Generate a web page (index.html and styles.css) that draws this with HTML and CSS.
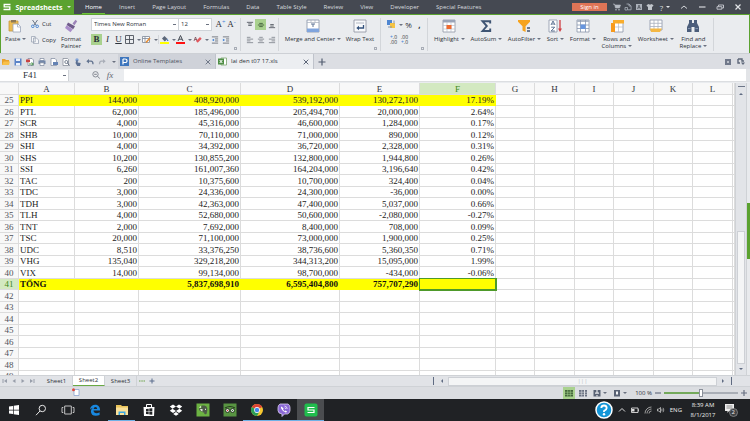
FILE: index.html
```html
<!DOCTYPE html>
<html lang="en">
<head>
    <meta charset="UTF-8">
    <meta name="viewport" content="width=device-width, initial-scale=1.0">
    <title>lai den t07 17.xls - Spreadsheets</title>
    <link rel="stylesheet" href="styles.css">
</head>
<body>

<div class="app">
    <header class="titlebar">
        <button class="brand">
            <svg class="brand-logo" viewBox="0 0 8 7"><path d="M7.5 1H1.2v2.3h5.6V6H.5" fill="none" stroke="#fff" stroke-width="1.3"/></svg>
            <span>Spreadsheets</span>
            <i class="caret light"></i>
        </button>
        <nav class="menu">
            <a href="#" class="active">Home</a>
            <a href="#">Insert</a>
            <a href="#">Page Layout</a>
            <a href="#">Formulas</a>
            <a href="#">Data</a>
            <a href="#">Table Style</a>
            <a href="#">Review</a>
            <a href="#">View</a>
            <a href="#">Developer</a>
            <a href="#">Special Features</a>
        </nav>
        <button class="sign-in">Sign in</button>
        <div class="title-tools">
            <button aria-label="Store"><svg viewBox="0 0 8 8"><path d="M0 1h1.5l1 4h4l1-3H2" fill="#b5bac2" stroke="#b5bac2" stroke-width=".6"/><circle cx="3" cy="6.8" r=".8" fill="#b5bac2"/><circle cx="6" cy="6.8" r=".8" fill="#b5bac2"/></svg></button>
            <button aria-label="Cloud"><svg viewBox="0 0 8 8"><path d="M2.5 1h2.6l2 2v3.8H4M1 7h2.5V4.500H1zM5 1v2h2" fill="none" stroke="#aab0ba" stroke-width=".8"/></svg></button>
            <button aria-label="Language"><svg viewBox="0 0 8 8"><path d="M1 1h6v6H1z" fill="#abb0b9"/><path d="M2.500 6L4 2l1.500 4M3 4.700h2" fill="none" stroke="#454952" stroke-width=".7"/></svg></button>
            <button aria-label="Skin"><svg viewBox="0 0 8 8"><path d="M.5 2.200L2.500 1q1.500 1 3 0l2 1.200-.8 1.600L6 3.500V7H2V3.500l-.7.300z" fill="#c0c4ca"/></svg></button>
            <button class="help" aria-label="Help">?<i class="caret light"></i></button>
        </div>
        <div class="window-tools">
            <button aria-label="Collapse ribbon"><svg viewBox="0 0 8 8"><path d="M1 5.500L4 3l3 2.500" fill="none" stroke="#d5d8dc"/></svg></button>
            <button aria-label="Minimize"><svg viewBox="0 0 8 8"><path d="M1 4h6.500" stroke="#d5d8dc" stroke-width="1.200"/></svg></button>
            <button aria-label="Restore"><svg viewBox="0 0 8 8"><path d="M2.500 3.500V2h5v3H6M1 3.700h4.800v2.500H1z" fill="none" stroke="#c9ccd2" stroke-width=".9"/></svg></button>
            <button aria-label="Close"><svg viewBox="0 0 8 8"><path d="M1.500 1.500l5 5M6.500 1.500l-5 5" stroke="#e2e4e7" stroke-width="1.200"/></svg></button>
        </div>
    </header>

    <section class="ribbon">
        <div class="group clipboard">
            <button class="command paste">
                <svg viewBox="0 0 14 14"><path d="M1 2h9v10H1z" fill="#edbc52" stroke="#c7993f" stroke-width=".8"/><path d="M3 1h5v2.500H3z" fill="#8d7a56"/><path d="M5 5h5l2.500 2.500V13H5z" fill="#fff" stroke="#9aa5b8" stroke-width=".8"/><path d="M9.500 5v3h3" fill="none" stroke="#9aa5b8" stroke-width=".7"/></svg>
                <span>Paste <i class="caret"></i></span>
            </button>
            <div class="stack">
                <button class="small"><svg viewBox="0 0 8 8"><path d="M1.500 0l3.800 5.500M6.500 0L2.700 5.500" stroke="#6c7686"/><circle cx="1.800" cy="6.300" r="1.300" fill="none" stroke="#4b86d1"/><circle cx="6.200" cy="6.300" r="1.300" fill="none" stroke="#4b86d1"/></svg><span>Cut</span></button>
                <button class="small"><svg viewBox="0 0 8 8"><path d="M.5.500h3.700v5.500H.5zM2.500 2h3l2 2v3.600h-5z" fill="#f5f6f8" stroke="#929cad" stroke-width=".7"/></svg><span>Copy</span></button>
            </div>
            <button class="command">
                <svg viewBox="0 0 14 14"><path d="M8.500 4.500L11.500.800l1.700 1.400-2.700 4" fill="#9c83b8"/><path d="M4 3.500l7 3.800-1.800 3L2.600 6z" fill="#6f5b8b"/><path d="M2.500 6.300l6.300 4-2.300 3L1 9z" fill="#a98cc9"/></svg>
                <span>Format<br>Painter</span>
            </button>
        </div>

        <div class="group font">
            <div class="row">
                <select class="font-name" aria-label="Font"><option>Times New Roman</option></select>
                <select class="font-size" aria-label="Font size"><option>12</option></select>
                <button class="letter grow">A<sup>+</sup></button>
                <button class="letter">A<sup>-</sup></button>
            </div>
            <div class="row">
                <button class="letter on"><b>B</b></button>
                <button class="letter"><i>I</i></button>
                <button class="letter"><u>U</u></button>
                <button class="drop" aria-label="Borders"><svg viewBox="0 0 9 9"><path d="M.5.500h8v8h-8zM4.500.500v8M.5 4.500h8" fill="none" stroke="#4e535c" stroke-width=".9"/></svg><i class="caret"></i></button>
                <button class="drop" aria-label="Draw border"><svg viewBox="0 0 9 9"><path d="M.5 1.500h7v6h-7zM.5 3.500h7M3 1.500v6" fill="#fff" stroke="#7e8898" stroke-width=".8"/><path d="M4 7.500L8 3" stroke="#e58b32" stroke-width="1.500"/></svg><i class="caret"></i></button>
                <button class="drop split" aria-label="Fill color"><svg viewBox="0 0 9 9"><path d="M2 3.500L4.500 1l3 3-2.700 2.500z" fill="#5c6779"/><path d="M7.500 3.500l1 2.500H7z" fill="#3976c5"/><path d="M0 7h9v2H0z" fill="#ff0"/></svg><i class="caret"></i></button>
                <button class="drop" aria-label="Font color"><svg viewBox="0 0 9 9"><path d="M2 6L4.500.500 7 6M3 4.200h3" fill="none" stroke="#454a54"/><path d="M0 7h9v2H0z" fill="#f11"/></svg><i class="caret"></i></button>
                <button class="drop" aria-label="Clear"><svg viewBox="0 0 9 9"><path d="M1 6l1.500-4L4 6M1.700 4.500h2" fill="none" stroke="#7a4b55" stroke-width=".8"/><path d="M3 6l4-4 1.700 1.700-4 4z" fill="#e2575d"/></svg><i class="caret"></i></button>
                <button class="glyph" aria-label="Decrease indent"><svg viewBox="0 0 9 9"><path d="M1 1h7M4.500 3.300H8M4.500 5.600H8M1 8h7" stroke="#6b7079"/><path d="M3.500 3v3L1 4.500z" fill="#3c7fd6"/></svg></button>
                <button class="glyph" aria-label="Increase indent"><svg viewBox="0 0 9 9"><path d="M1 1h7M4.500 3.300H8M4.500 5.600H8M1 8h7" stroke="#6b7079"/><path d="M1 3v3l2.500-1.500z" fill="#3c7fd6"/></svg></button>
            </div>
            <i class="launcher"></i>
        </div>

        <div class="group align">
            <div class="row">
                <button class="glyph" aria-label="Top"><svg viewBox="0 0 9 9"><path d="M1 1.500h7M2.500 3.300h4M2.500 5h4" stroke="#555a63"/></svg></button>
                <button class="glyph on" aria-label="Middle"><svg viewBox="0 0 9 9"><path d="M1 4.500h7M2.500 2.700h4M2.500 6.300h4" stroke="#3f5e38"/></svg></button>
                <button class="glyph" aria-label="Bottom"><svg viewBox="0 0 9 9"><path d="M1 7.500h7M2.500 4h4M2.500 5.700h4" stroke="#555a63"/></svg></button>
            </div>
            <div class="row">
                <button class="glyph" aria-label="Left"><svg viewBox="0 0 9 9"><path d="M1 1.500h4M1 3.500h7M1 5.500h4M1 7.500h7" stroke="#7a7e86" stroke-width=".9"/></svg></button>
                <button class="glyph" aria-label="Center"><svg viewBox="0 0 9 9"><path d="M2.500 1.500h4M1 3.500h7M2.500 5.500h4M1 7.500h7" stroke="#7a7e86" stroke-width=".9"/></svg></button>
                <button class="glyph" aria-label="Right"><svg viewBox="0 0 9 9"><path d="M4 1.500h4M1 3.500h7M4 5.500h4M1 7.500h7" stroke="#7a7e86" stroke-width=".9"/></svg></button>
            </div>
        </div>

        <div class="group merge">
            <button class="command">
                <svg viewBox="0 0 14 14"><path d="M1 1h12v12H1z" fill="#fff" stroke="#8792a7" stroke-width=".8"/><path d="M1 9.500h12V13H1z" fill="#80a5de"/><path d="M1 3.500h12M5 1v2.500M9 1v2.500" stroke="#a5adbc" stroke-width=".7"/><path d="M5 5h4M7 5v3" stroke="#5c7395"/></svg>
                <span>Merge and Center <i class="caret"></i></span>
            </button>
            <button class="command">
                <svg viewBox="0 0 14 14"><path d="M1 1h12v12H1z" fill="#f8f9fb" stroke="#8a8fa0" stroke-width=".8"/><path d="M3 4h8" stroke="#b3b8c2"/><path d="M10.500 6v3H5" fill="none" stroke="#33517c" stroke-width="1.300"/><path d="M6 6.800v4.400L3.300 9z" fill="#33517c"/></svg>
                <span>Wrap Text</span>
            </button>
            <i class="launcher"></i>
        </div>

        <div class="group number">
            <div class="row">
                <button class="drop" aria-label="Currency"><svg viewBox="0 0 9 9"><path d="M0 0h5v5H0z" fill="#4f86d1"/><path d="M3 3h5v5H3z" fill="#f6c443"/><path d="M1 7h4M7 .500v3" stroke="#8494ad"/></svg><i class="caret"></i></button>
                <button class="letter sans">%</button>
                <button class="letter sans"><b>,</b></button>
            </div>
            <div class="row">
                <button class="decimal" aria-label="Increase decimal"><em>+</em>.0<br>.00</button>
                <button class="decimal" aria-label="Decrease decimal">.00<br><em>+</em>.0</button>
            </div>
            <i class="launcher"></i>
        </div>

        <div class="group commands">
            <button class="command">
                <svg viewBox="0 0 14 14"><path d="M1 1h12v12H1z" fill="#fff" stroke="#8d94a3" stroke-width=".8"/><path d="M1 1h12v2.500H1z" fill="#9aa4b8"/><path d="M1 6.500h12M1 10h12M5 3v10M9 3v10" stroke="#b9bfcb" stroke-width=".7"/><path d="M4.500 6h5v4h-5z" fill="#ee6a30"/></svg>
                <span>Highlight <i class="caret"></i></span>
            </button>
            <button class="command">
                <svg viewBox="0 0 14 14"><path d="M11.200 4.500V2.200H3.500L7.800 7l-4.300 5h7.700V9.500" fill="none" stroke="#3e5473" stroke-width="1.900"/></svg>
                <span>AutoSum <i class="caret"></i></span>
            </button>
            <button class="command">
                <svg viewBox="0 0 14 14"><path d="M1 1h12v1.800L8.600 7.300V13L5.500 11.500V7.300L1 2.800z" fill="#f6a31d"/><path d="M10 9h3M10 12h3" stroke="#43536d" stroke-width="1.300"/></svg>
                <span>AutoFilter <i class="caret"></i></span>
            </button>
            <button class="command">
                <svg viewBox="0 0 14 14"><path d="M1 1h8v12H1z" fill="#fff" stroke="#8b95a8" stroke-width=".8"/><path d="M3 6l2-4 2 4M3.700 5h2.600M3.200 8.200h3.500L3.200 12h3.700" fill="none" stroke="#4e6589" stroke-width=".9"/><path d="M12 1v9" stroke="#cf3e43" stroke-width="1.300"/><path d="M10 9.500h4L12 13z" fill="#cf3e43"/></svg>
                <span>Sort <i class="caret"></i></span>
            </button>
            <button class="command">
                <svg viewBox="0 0 14 14"><path d="M1 1h12v12H1z" fill="#fff" stroke="#8b95a8" stroke-width=".8"/><path d="M1 1h12v2H1z" fill="#aeb7c6"/><path d="M1 6h12M1 9.500h12M4.500 1v12M9.500 1v12" stroke="#8797b2" stroke-width=".8"/><path d="M4.500 5.500h5v4.500h-5z" fill="#6796df"/></svg>
                <span>Format <i class="caret"></i></span>
            </button>
            <button class="command">
                <svg viewBox="0 0 14 14"><path d="M4 3h9v10H4z" fill="#fff" stroke="#8b95a8" stroke-width=".8"/><path d="M8.500 3v10M4 8h9" stroke="#b4bbc8" stroke-width=".7"/><path d="M1 4h4v9H1z" fill="#f79a1c"/><path d="M3 1h11v3.500H3z" fill="#f9ad2c"/></svg>
                <span>Rows and<br>Columns <i class="caret"></i></span>
            </button>
            <button class="command">
                <svg viewBox="0 0 14 14"><path d="M1 1h12v10H1z" fill="#fff" stroke="#8b95a8" stroke-width=".8"/><path d="M1 4.300h12M1 7.500h12M5 1v10M9 1v10" stroke="#a9b1bf" stroke-width=".8"/><path d="M1 9.500h12l-2 3.500H2z" fill="#f4b744"/></svg>
                <span>Worksheet <i class="caret"></i></span>
            </button>
            <button class="command">
                <svg viewBox="0 0 14 14"><path d="M3 1h3v3h2V1h3v3l2 4v5H8.500V8h-3v5H1V8l2-4z" fill="#4b5d7b"/><path d="M2 9.500h2.500M9.500 9.500H12" stroke="#8294b0"/></svg>
                <span>Find and<br>Replace <i class="caret"></i></span>
            </button>
        </div>
    </section>

    <section class="tabs">
        <div class="quick">
            <button aria-label="Open"><svg viewBox="0 0 8 8"><path d="M0 1h3l1 1h3v5H0z" fill="#e8a12c"/><path d="M1.500 3.500H8L7 7H0z" fill="#f8c04a"/></svg></button>
            <button aria-label="Save"><svg viewBox="0 0 8 8"><path d="M.5.500h7v7h-7z" fill="#5a83c8"/><path d="M2 .500h4V3H2zM2 5h4v2.500H2z" fill="#eef3fb"/></svg></button>
            <button aria-label="Export PDF"><svg viewBox="0 0 8 8"><path d="M2 .500h4L7.500 2v5.500H2z" fill="#fff" stroke="#76809a" stroke-width=".7"/><path d="M0 1.500h4v2.700H0z" fill="#c94343"/><path d="M3 6h4M5.500 4.500L7.500 6l-2 1.500" stroke="#4b9350" fill="none"/></svg></button>
            <button aria-label="Print"><svg viewBox="0 0 8 8"><path d="M2 .500h4v2H2z" fill="#fff" stroke="#7b879c" stroke-width=".7"/><path d="M.5 2.500h7v3.500h-7z" fill="#7388ab"/><path d="M2 4.800h4v2.700H2z" fill="#fff" stroke="#7b879c" stroke-width=".7"/></svg></button>
            <button aria-label="Quick print"><svg viewBox="0 0 8 8"><path d="M1 .500h4l1.500 1.500v5.500H1z" fill="#fff" stroke="#7b879c" stroke-width=".7"/><path d="M3 4h5v3H3z" fill="#6482b4"/></svg></button>
            <button aria-label="Preview"><svg viewBox="0 0 8 8"><path d="M1 .500h4.500l1 1v6H1z" fill="#fff" stroke="#7b828f" stroke-width=".7"/><circle cx="4.300" cy="4" r="1.500" fill="none" stroke="#596578" stroke-width=".8"/><path d="M5.500 5.200L7.500 7.500" stroke="#596578"/></svg></button>
            <button aria-label="Touch"><svg viewBox="0 0 8 8"><circle cx="3" cy="2" r="1.700" fill="#81a4d9"/><path d="M2.500 2h1.200v2.500l3 .5L6 8H3.200L1.500 5z" fill="#5b6f92"/></svg></button>
            <button aria-label="Undo"><svg viewBox="0 0 8 8"><path d="M2 3.200h3q2 0 2 3" fill="none" stroke="#62738f" stroke-width="1.300"/><path d="M3 1v4.500L.3 3.200z" fill="#62738f"/></svg></button>
            <button aria-label="Redo"><svg viewBox="0 0 8 8"><path d="M6 3.200H3.500q-2 0-2 3" fill="none" stroke="#a9aeb8" stroke-width="1.300"/><path d="M5 1v4.500l2.700-2.300z" fill="#a9aeb8"/></svg></button>
            <button aria-label="Customize"><i class="caret"></i></button>
        </div>
        <div class="doc-tab">
            <svg viewBox="0 0 9 9"><path d="M0 0h9v9H0z" fill="#3e76bd"/><path d="M3 2v5.500M3 2h2q2 0 2 1.800T5 5.500H3" fill="none" stroke="#fff" stroke-width="1.200"/></svg>
            <span>Online Templates</span>
            <button class="close" aria-label="Close tab"><svg viewBox="0 0 6 6"><path d="M.7.700l4.600 4.600M5.300.700L.7 5.300" stroke="#666f80" stroke-width=".9"/></svg></button>
        </div>
        <div class="doc-tab current">
            <svg viewBox="0 0 9 9"><path d="M3 1h5.500v7H3z" fill="#fff" stroke="#7ba36e" stroke-width=".8"/><path d="M0 1.500h6v6H0z" fill="#4f8e46"/><path d="M1.700 3l2.600 3M4.300 3L1.700 6" stroke="#fff"/></svg>
            <span>lai den t07 17.xls</span>
            <button class="close" aria-label="Close tab"><svg viewBox="0 0 6 6"><path d="M.7.700l4.600 4.600M5.300.700L.7 5.300" stroke="#4c566a" stroke-width=".9"/></svg></button>
        </div>
        <button class="new-tab" aria-label="New tab"><svg viewBox="0 0 8 8"><path d="M4 .500v7M.5 4h7" stroke="#535d70" stroke-width="1.200"/></svg></button>
        <div class="tab-tools">
            <button aria-label="Tab list"><svg viewBox="0 0 8 8"><path d="M1 1h6v6H1z" fill="#70788a"/><path d="M3 3h2v2H3z" fill="#b9bec8"/></svg></button>
            <button aria-label="Tab options"><svg viewBox="0 0 8 8"><path d="M1 1h4v2h2M1 1v4h2" fill="none" stroke="#5f687a" stroke-width="1.400"/><path d="M4 4.500h4L6 7z" fill="#5f687a"/></svg></button>
        </div>
    </section>

    <section class="formula-bar">
        <input class="name-box" aria-label="Name box" value="F41">
        <i class="caret name-caret"></i>
        <button class="fx-search" aria-label="Find"><svg viewBox="0 0 8 8"><circle cx="3.500" cy="3.300" r="2.700" fill="none" stroke="#7d828c" stroke-width=".9"/><path d="M2.200 3.300h2.600M5.500 5.300L7.800 7.500" stroke="#7d828c"/></svg></button>
        <button class="fx" aria-label="Insert function"><i>fx</i></button>
        <input class="formula" aria-label="Formula">
    </section>

    <main class="workspace">
        <div class="sheet">
            <table>
                <colgroup>
                    <col class="w-head"><col class="w-a"><col class="w-b"><col class="w-c"><col class="w-d"><col class="w-e"><col class="w-f">
                    <col class="w-g"><col class="w-h"><col class="w-g"><col class="w-h"><col class="w-g"><col class="w-h"><col>
                </colgroup>
                <thead>
                    <tr><th></th><th>A</th><th>B</th><th>C</th><th>D</th><th>E</th><th class="picked">F</th><th>G</th><th>H</th><th>I</th><th>J</th><th>K</th><th>L</th><th></th></tr>
                </thead>
                <tbody id="rows"></tbody>
            </table>
        </div>
        <div class="scroll-v">
            <i class="split-bar"></i>
            <i class="arrow up"></i>
            <div class="track"><div class="thumb"></div></div>
            <i class="arrow down"></i>
        </div>
        <div class="side"><button class="side-tab" aria-label="Task pane"></button></div>
    </main>

    <section class="sheet-tabs">
        <div class="sheet-nav">
            <button aria-label="First sheet"><svg viewBox="0 0 6 6"><path d="M1 1v4" stroke="#989eaa"/><path d="M5 1v4L2 3z" fill="#989eaa"/></svg></button>
            <button aria-label="Previous sheet"><svg viewBox="0 0 6 6"><path d="M4.500 1v4l-3-2z" fill="#989eaa"/></svg></button>
            <button aria-label="Next sheet"><svg viewBox="0 0 6 6"><path d="M1.500 1v4l3-2z" fill="#989eaa"/></svg></button>
            <button aria-label="Last sheet"><svg viewBox="0 0 6 6"><path d="M5 1v4" stroke="#989eaa"/><path d="M1 1v4l3-2z" fill="#989eaa"/></svg></button>
        </div>
        <button class="sheet-tab">Sheet1</button>
        <button class="sheet-tab current">Sheet2</button>
        <button class="sheet-tab">Sheet3</button>
        <button class="more" aria-label="All sheets"><svg viewBox="0 0 6 6"><path d="M0 3h1.500M2.300 3h1.500M4.500 3H6" stroke="#6ba349" stroke-width="1.200"/></svg></button>
        <button class="more" aria-label="Add sheet"><svg viewBox="0 0 6 6"><path d="M3 .500v5M.5 3h5" stroke="#5a6c8d"/></svg></button>
        <div class="scroll-h">
            <i class="grip"></i>
            <i class="arrow left"></i>
            <div class="thumb"><span>|||</span></div>
            <i class="arrow right"></i>
            <i class="grip"></i>
        </div>
    </section>

    <footer class="status">
        <svg class="macro" viewBox="0 0 8 8"><path d="M2 1.500h5v6H2z" fill="#fff" stroke="#8ba4d0" stroke-width=".8"/><circle cx="1.500" cy="1.800" r="1.500" fill="#e0483c"/></svg>
        <div class="views">
            <button class="on" aria-label="Normal view"><svg viewBox="0 0 8 8"><path d="M0 1h8v6.500H0z" fill="#44663a"/><path d="M0 3.200h8M0 5.400h8M2.700 1v6.500M5.300 1v6.500" stroke="#a3cf8c" stroke-width=".6"/></svg></button>
            <button aria-label="Page break view"><svg viewBox="0 0 8 8"><path d="M0 1h5v6.500H0zM6 1h2v6.500H6z" fill="#697081"/><path d="M0 3.200h8M0 5.400h8M2.700 1v6.500" stroke="#d8dbe0" stroke-width=".6"/></svg></button>
            <button aria-label="Reading layout"><svg viewBox="0 0 8 8"><path d="M.5 1h7v6.500h-7z" fill="#596274"/><path d="M4 1v3M2 4.200h4M4 6v1.500" stroke="#e6e8ec" stroke-width="1.200"/></svg><i class="caret"></i></button>
            <button aria-label="Full screen"><svg viewBox="0 0 8 8"><path d="M1 1h6v6.500H1z" fill="#596274"/><path d="M3 2.500h2v3H3z" fill="#f4f5f7"/></svg><i class="caret"></i></button>
        </div>
        <label class="zoom-label" for="zoom">100 %</label>
        <button class="step" aria-label="Zoom out"><svg viewBox="0 0 6 6"><path d="M0 3h6" stroke="#687183" stroke-width="1.200"/></svg></button>
        <input class="zoom" id="zoom" type="range" min="0" max="100" value="50">
        <button class="step" aria-label="Zoom in"><svg viewBox="0 0 6 6"><path d="M3 0v6M0 3h6" stroke="#687183" stroke-width="1.200"/></svg></button>
    </footer>
</div>

<div class="taskbar">
    <button aria-label="Start"><svg viewBox="0 0 14 14"><path d="M2 3.500l4-.6v3.800H2zM6.700 2.800L12 2v4.700H6.700zM2 7.400h4v3.700l-4-.6zM6.700 7.400H12V12l-5.300-.8z" fill="#fff"/></svg></button>
    <button aria-label="Search"><svg viewBox="0 0 14 14"><circle cx="8.300" cy="5.500" r="3.200" fill="none" stroke="#e8e8e8"/><path d="M6 8l-4 4.200" stroke="#e8e8e8"/></svg></button>
    <button aria-label="Task view"><svg viewBox="0 0 14 14"><path d="M3.700 3h6.600v8H3.700zM2.300 4.500H1v5h1.300M11.700 4.500H13v5h-1.300" fill="none" stroke="#d5d5d5" stroke-width=".9"/></svg></button>
    <button aria-label="Edge"><svg viewBox="0 0 14 14"><path d="M2 6.500C2.300 3.500 4.500 1.800 7.200 1.800c3.400 0 4.900 2.400 4.900 5.800H5.500q.3 2.600 3 2.600 1.700 0 3.100-.9V12q-1.500.8-3.800.8-4.800 0-4.900-4.600.1-2.200 2-3.500Q3.200 5.200 2 6.500zM5.600 5.900h3.600q-.1-1.800-1.700-1.800-1.600 0-1.900 1.800z" fill="#1888e0"/></svg></button>
    <button class="open" aria-label="File Explorer"><svg viewBox="0 0 14 14"><path d="M1 2h5l1 1h6v9H1z" fill="#e9c45a"/><path d="M1 4.500h12V12H1z" fill="#fae199"/><path d="M3.500 12V8.500h7V12H9V10H5v2z" fill="#3ba5e0"/></svg></button>
    <button aria-label="Store"><svg viewBox="0 0 14 14"><path d="M1.500 4h11L12 13H2z" fill="#fff"/><path d="M4.500 4V1.500h5V4" fill="none" stroke="#fff"/><path d="M4 6l2.700-.3v2.500H4zM7.300 5.600l3-.4v3h-3zM4 8.800h2.700v2.500L4 11zM7.300 8.800h3v3l-3-.4z" fill="#222426"/></svg></button>
    <button aria-label="Dropbox"><svg viewBox="0 0 14 14"><path d="M4 1.500l3 2-3.500 2.200L.8 3.600zM10 1.500l-3 2 3.500 2.200 2.700-2.100zM3.500 5.700L7 8l-3 2L.8 7.800zM10.500 5.700L7 8l3 2 3.200-2.200zM7 9l2.800 2L7 12.800 4.200 11z" fill="#fff"/></svg></button>
    <button aria-label="Evernote"><svg viewBox="0 0 14 14"><path d="M.5.500h13v13H.5z" fill="#6cb343"/><path d="M5.500 2.500h3q2.500.500 2.800 3 .3 3-.8 5.500-2.500 1.200-2.300-1.500-1.700.300-2.200-1Q3 8.500 3 5.300h2.500z" fill="#4d5a48"/><path d="M3 4.700l2-2v2z" fill="#eef3ea"/><path d="M4 6q.5 2 2.500 2.500V6z" fill="#dfe8da"/><path d="M9 6.300h1" stroke="#fff"/></svg></button>
    <button aria-label="TripAdvisor"><svg viewBox="0 0 14 14"><path d="M.5.500h13v13H.5z" fill="#589442"/><path d="M2 5q5-3 10 0" fill="none" stroke="#26381f" stroke-width="1.200"/><circle cx="4.500" cy="7.500" r="2" fill="#eee" stroke="#26381f"/><circle cx="9.500" cy="7.500" r="2" fill="#eee" stroke="#26381f"/><circle cx="4.500" cy="7.500" r=".7" fill="#c33"/><circle cx="9.500" cy="7.500" r=".7" fill="#373"/></svg></button>
    <button class="open" aria-label="Chrome"><svg viewBox="0 0 14 14"><circle cx="7" cy="7" r="6" fill="#f6c730"/><path d="M7 7L1.800 4A6 6 0 0 1 12.200 4z" fill="#dc4437"/><path d="M1.800 4A6 6 0 0 0 7 13l2.500-4.500L7 7z" fill="#2d9f58"/><circle cx="7" cy="7" r="2.900" fill="#fff"/><circle cx="7" cy="7" r="2.200" fill="#4587ee"/></svg></button>
    <button class="open" aria-label="Viber"><svg viewBox="0 0 14 14"><path d="M3 1h8q2 1 2 3.500v3Q13 10 10.500 11H7.500L5 13.500V11Q1 10.500 1 7.500v-3Q1 2 3 1z" fill="#8c69d6" stroke="#d9cef1" stroke-width=".8"/><path d="M4.500 3.500q-1 .7-.3 2 1.600 3.300 4.500 4 1 0 1.300-1L8.500 7.500l-.8.700Q6.500 7.500 6 6.300l.6-.8z" fill="#fff"/><path d="M7.500 3q2.500.3 2.700 3M7.700 4.600q.9.200 1 1.300" fill="none" stroke="#fff" stroke-width=".7"/></svg></button>
    <button class="open focused" aria-label="Spreadsheets"><svg viewBox="0 0 14 14"><rect x=".5" y=".500" width="13" height="13" rx="2" fill="#20bd4d"/><path d="M10.500 4.500H4V7h6v2.500H3.500" fill="none" stroke="#fff" stroke-width="1.200"/></svg></button>
    <div class="tray">
        <button class="assist" aria-label="Assist"><svg viewBox="0 0 18 18"><circle cx="9" cy="9" r="8" fill="#1496d8" stroke="#fff" stroke-width="1.500"/><path d="M6.300 7Q6.500 4.500 9 4.500T11.700 7Q11.700 8.500 9 10v1" fill="none" stroke="#fff" stroke-width="1.800"/><circle cx="9" cy="13.200" r="1.200" fill="#fff"/></svg></button>
        <button aria-label="Hidden icons"><svg viewBox="0 0 8 8"><path d="M1 5.500L4 2.500l3 3" fill="none" stroke="#ddd"/></svg></button>
        <button aria-label="Battery"><svg viewBox="0 0 8 8"><path d="M.5 2h6.500v4.500H.5z" fill="none" stroke="#ddd" stroke-width=".9"/><path d="M1 3h2.500v2.500H1zM7.200 3.300H8v2h-.8z" fill="#ddd"/></svg></button>
        <button aria-label="Wi-Fi"><svg viewBox="0 0 8 8"><path d="M1 7.500A6.500 6.500 0 0 1 7.500 1M3 7.500A4.500 4.500 0 0 1 7.500 3M5 7.500A2.500 2.500 0 0 1 7.500 5" fill="none" stroke="#aaa" stroke-width=".9"/></svg></button>
        <button aria-label="Volume"><svg viewBox="0 0 8 8"><path d="M.5 3h1.300L3.500 1.500v5L1.800 5H.5z" fill="none" stroke="#ddd" stroke-width=".7"/><path d="M4.700 2.800q.8 1.200 0 2.400M6 1.800q1.700 2.200 0 4.400" fill="none" stroke="#ccc" stroke-width=".7"/></svg></button>
        <button class="lang">ENG</button>
        <button class="clock">8:39 AM<br>8/1/2017</button>
        <button class="notes" aria-label="Notifications"><svg viewBox="0 0 14 14"><path d="M1 1h9v7H5L3.500 10V8H1z" fill="#eee"/><path d="M2.500 3h6M2.500 5h6" stroke="#666" stroke-width=".7"/><circle cx="9.500" cy="9.500" r="4" fill="#3d3f42" stroke="#999" stroke-width=".7"/></svg><span>2</span></button>
    </div>
</div>

<script>
    const data = [
        ['PPI', '144,000', '408,920,000', '539,192,000', '130,272,100', '17.19%'],
        ['PTL', '62,000', '185,496,000', '205,494,700', '20,000,000', '2.64%'],
        ['SCR', '4,000', '45,316,000', '46,600,000', '1,284,000', '0.17%'],
        ['SHB', '10,000', '70,110,000', '71,000,000', '890,000', '0.12%'],
        ['SHI', '4,000', '34,392,000', '36,720,000', '2,328,000', '0.31%'],
        ['SHS', '10,200', '130,855,200', '132,800,000', '1,944,800', '0.26%'],
        ['SSI', '6,260', '161,007,360', '164,204,000', '3,196,640', '0.42%'],
        ['TAC', '200', '10,375,600', '10,700,000', '324,400', '0.04%'],
        ['TDC', '3,000', '24,336,000', '24,300,000', '-36,000', '0.00%'],
        ['TDH', '3,000', '42,363,000', '47,400,000', '5,037,000', '0.66%'],
        ['TLH', '4,000', '52,680,000', '50,600,000', '-2,080,000', '-0.27%'],
        ['TNT', '2,000', '7,692,000', '8,400,000', '708,000', '0.09%'],
        ['TSC', '20,000', '71,100,000', '73,000,000', '1,900,000', '0.25%'],
        ['UDC', '8,510', '33,376,250', '38,736,600', '5,360,350', '0.71%'],
        ['VHG', '135,040', '329,218,200', '344,313,200', '15,095,000', '1.99%'],
        ['VIX', '14,000', '99,134,000', '98,700,000', '-434,000', '-0.06%'],
        ['TỔNG', '', '5,837,698,910', '6,595,404,800', '757,707,290', '']
    ];

    const firstRow = 25;
    const lastRow = 49;
    const columns = 13;
    const rows = document.getElementById('rows');

    for (let n = firstRow; n <= lastRow; n++) {
        const values = data[n - firstRow] || [];
        const tr = document.createElement('tr');
        if (n === 25) tr.className = 'marked';
        if (n === 41) tr.className = 'marked total';

        let html = `<th>${n}</th>`;
        for (let c = 0; c < columns; c++) {
            const selected = n === 41 && c === 5;
            html += `<td${selected ? ' class="selected"' : ''}>${values[c] || ''}</td>`;
        }
        tr.innerHTML = html;
        rows.appendChild(tr);
    }
</script>

</body>
</html>
```
FILE: styles.css
```css
* {
    box-sizing: border-box;
}

body {
    margin: 0;
    height: 100vh;
    display: flex;
    flex-direction: column;
    overflow: hidden;
    font-family: 'Open Sans', 'Noto Sans', sans-serif;
    font-size: 6px;
    line-height: 7px;
    color: #2c3038;
}

button, input, select {
    font: inherit;
    color: inherit;
    border: none;
    background: none;
    padding: 0;
    margin: 0;
    border-radius: 0;
    outline: none;
}

button {
    display: flex;
    align-items: center;
    justify-content: center;
    flex-shrink: 0;
}

a {
    color: inherit;
    text-decoration: none;
}

svg {
    display: block;
    flex-shrink: 0;
    width: 8px;
    height: 8px;
}

.caret {
    display: inline-block;
    border: 2px solid transparent;
    border-top-color: #6a7180;
    border-bottom: 0;
    vertical-align: middle;
}

.caret.light {
    border-top-color: #e4e7ea;
}

.app {
    flex: 1;
    min-height: 0;
    display: flex;
    flex-direction: column;
    background: #eaecef;
}

/* title bar */
.titlebar {
    display: flex;
    align-items: stretch;
    height: 15px;
    background: #454952;
    border-bottom: 1px solid #5ba230;
    color: #d8dbdf;
}

.brand {
    width: 74px;
    gap: 4px;
    margin-right: 8px;
    background: #5ba230;
    color: #fff;
    font-size: 7px;
    font-weight: bold;
}

.menu {
    flex: 1;
    display: flex;
    gap: 11px;
}

.menu a {
    padding: 4px 3px 0;
}

.menu .active {
    color: #fff;
    border-bottom: 1px solid #6fc23c;
}

.sign-in {
    align-self: center;
    width: 35px;
    height: 8px;
    margin-right: 6px;
    background: #de7456;
    color: #fff;
}

.title-tools, .window-tools {
    display: flex;
    gap: 3px;
}

.window-tools {
    gap: 10px;
    margin: 0 8px 0 7px;
}

.help {
    width: 16px;
    gap: 3px;
    font-size: 8px;
}

/* ribbon */
.ribbon {
    display: flex;
    height: 38px;
    background: #eaecef;
    border-left: 1px solid #5ba230;
    border-right: 1px solid #5ba230;
}

.group {
    position: relative;
    display: flex;
    margin: 3px 0 2px;
    border-right: 1px solid #d3d6da;
}

.group.clipboard {
    width: 86px;
    gap: 5px;
    padding-left: 4px;
    border-right: 0;
}

.group.font {
    width: 154px;
    flex-direction: column;
    padding-left: 4px;
}

.group.align {
    width: 38px;
    flex-direction: column;
    padding-left: 3px;
}

.group.merge {
    width: 102px;
    justify-content: center;
    gap: 5px;
}

.group.number {
    width: 47px;
    flex-direction: column;
    padding-left: 5px;
}

.group.commands {
    padding: 0 6px;
    gap: 6px;
}

.row {
    display: flex;
    align-items: center;
    height: 13px;
    margin-bottom: 2px;
}

.command {
    flex-direction: column;
    justify-content: flex-start;
    padding-top: 1px;
    text-align: center;
    white-space: nowrap;
}

.command svg {
    width: 14px;
    height: 14px;
    margin-bottom: 3px;
}

.stack {
    display: flex;
    flex-direction: column;
    gap: 8px;
    padding-top: 2px;
}

.small {
    gap: 3px;
    justify-content: flex-start;
}

.font-name, .font-size {
    height: 13px;
    padding: 0 2px;
    background: #fff;
    border: 1px solid #cfd3d8;
    appearance: none;
    background-image: linear-gradient(#6a7180, #6a7180);
    background-size: 3px 1px;
    background-repeat: no-repeat;
    background-position: right 2px center;
}

.font-name {
    width: 88px;
}

.font-size {
    width: 34px;
    margin-left: -1px;
}

.letter {
    width: 11px;
    height: 11px;
    font-family: 'Liberation Serif', serif;
    font-size: 9px;
}

.letter.grow {
    margin-left: 3px;
}

.letter sup {
    font-size: 6px;
    line-height: 6px;
    color: #3c7fd6;
    align-self: flex-start;
}

.letter.sans {
    font-family: 'Open Sans', sans-serif;
    font-size: 8px;
}

.on {
    background: #a9d18e;
}

.drop {
    width: 17px;
    gap: 3px;
}

.drop svg {
    width: 9px;
    height: 9px;
}

.drop.split {
    border-left: 1px solid #d3d6da;
    padding-left: 1px;
}

.glyph {
    width: 11px;
    height: 11px;
}

.decimal {
    width: 11px;
    font-size: 5px;
    line-height: 5px;
    display: block;
    text-align: right;
}

.decimal em {
    font-style: normal;
    color: #3c7fd6;
}

.launcher {
    position: absolute;
    right: 3px;
    bottom: 1px;
    width: 3px;
    height: 3px;
    border: 1px solid #a8adb6;
}

/* document tabs */
.tabs {
    display: flex;
    height: 16px;
    background: #dcdee3;
    border-top: 1px solid #cdd0d5;
}

.quick {
    display: flex;
    width: 118px;
}

.quick button {
    width: 12px;
}

.doc-tab {
    display: flex;
    align-items: center;
    gap: 4px;
    width: 98px;
    padding: 0 4px 0 2px;
    background: #cfd2d9;
    border-right: 1px solid #bfc3cb;
    color: #4b515d;
}

.doc-tab.current {
    background: #eceef1;
    color: #2c3038;
}

.doc-tab svg {
    width: 9px;
    height: 9px;
}

.doc-tab .close {
    margin-left: auto;
}

.doc-tab .close svg {
    width: 6px;
    height: 6px;
}

.new-tab {
    width: 16px;
}

.tab-tools {
    display: flex;
    gap: 5px;
    margin: 0 5px 0 auto;
}

/* formula bar */
.formula-bar {
    display: flex;
    align-items: center;
    height: 13px;
    margin-bottom: 1px;
    border-bottom: 1px solid #dcdee1;
    border-right: 4px solid #e2e4e7;
}

.name-box {
    width: 60px;
    height: 11px;
    background: #fff;
    font-family: 'Liberation Serif', serif;
    font-size: 9px;
    text-align: center;
}

.name-caret {
    width: 9px;
    height: 11px;
    border: 0;
    background: #fff linear-gradient(#6a7180, #6a7180) center / 3px 1px no-repeat;
    border-right: 1px solid #cfd2d6;
}

.fx-search {
    margin-left: 23px;
}

.fx {
    width: 20px;
    font-family: 'Liberation Serif', serif;
    font-size: 9px;
    color: #60656f;
}

.formula {
    flex: 1;
    height: 12px;
    margin-left: 4px;
    background: #fff;
}

/* grid */
.workspace {
    flex: 1;
    min-height: 0;
    display: flex;
}

.sheet {
    flex: 1;
    min-width: 0;
    overflow: hidden;
    background: #fff;
}

table {
    width: 100%;
    table-layout: fixed;
    border-collapse: separate;
    border-spacing: 0;
    font-family: 'Liberation Serif', serif;
    font-size: 9px;
    line-height: 10px;
    color: #222;
}

.w-head { width: 19px; }
.w-a { width: 56px; }
.w-b { width: 64px; }
.w-c { width: 102px; }
.w-d { width: 99px; }
.w-e { width: 80px; }
.w-f { width: 76px; }
.w-g { width: 39px; }
.w-h { width: 40px; }

th, td {
    height: 12px;
    padding: 0 1px;
    border-right: 1px solid #dcdcdc;
    border-bottom: 1px solid #dcdcdc;
    text-align: right;
    white-space: nowrap;
}

tbody tr:nth-child(odd) th,
tbody tr:nth-child(odd) td {
    height: 11px;
}

th {
    background: #f8f8f8;
    font-weight: normal;
    text-align: center;
    color: #50545c;
}

thead th {
    color: #33363c;
}

td:nth-child(2) {
    text-align: left;
}

th.picked, .total th {
    background: #d3e9c1;
    color: #3f8a22;
}

.marked td:nth-child(-n+7) {
    background: #ff0;
    border-color: #ff0;
}

.total td {
    font-weight: bold;
    color: #111;
}

.marked td.selected {
    background: #ff0;
    outline: 1px solid #4e9a2a;
    border-color: #4e9a2a;
}

.scroll-v {
    display: flex;
    flex-direction: column;
    align-items: center;
    width: 11px;
    padding: 3px 0;
    background: #e2e4e8;
    border-left: 1px solid #cfd2d6;
}

.split-bar {
    width: 7px;
    height: 1px;
    background: #6d7688;
}

.track {
    flex: 1;
    display: flex;
    width: 8px;
    margin: 2px 0 4px;
    align-items: flex-end;
}

.thumb {
    background: #f4f5f6;
    border: 1px solid #cdd0d5;
}

.track .thumb {
    width: 100%;
    height: 50%;
}

.arrow {
    border: 2px solid transparent;
}

.arrow.up { border-bottom-color: #5f6b82; margin-top: 4px; }
.arrow.down { border-top-color: #5f6b82; }
.arrow.left { border-right-color: #5f6b82; }
.arrow.right { border-left-color: #5f6b82; }

.side {
    width: 4px;
    display: flex;
    align-items: center;
    padding-top: 4px;
    background: #e8eaed;
    border-left: 1px solid #cfd2d6;
}

.side-tab {
    width: 3px;
    height: 56px;
    background: #5ba230;
}

/* sheet tabs */
.sheet-tabs {
    display: flex;
    height: 12px;
    background: #e1e3e7;
    border-top: 1px solid #cfd2d6;
    border-bottom: 1px solid #cfd2d6;
}

.sheet-nav {
    display: flex;
    width: 41px;
    gap: 3px;
    padding-left: 2px;
}

.sheet-tabs svg {
    width: 6px;
    height: 6px;
}

.sheet-tab {
    width: 32px;
    border-right: 1px solid #cfd2d6;
}

.sheet-tab.current {
    background: #fff;
    border-bottom: 1px solid #69a944;
}

.more {
    width: 10px;
}

.scroll-h {
    flex: 0 1 299px;
    display: flex;
    align-items: center;
    gap: 5px;
    margin: 0 18px 0 auto;
}

.scroll-h .thumb {
    flex: 1;
    height: 9px;
    line-height: 7px;
    text-align: center;
    color: #b9bdc5;
}

.grip {
    width: 1px;
    height: 8px;
    background: #5f6b82;
}

/* status bar */
.status {
    display: flex;
    align-items: center;
    height: 12px;
    padding-right: 3px;
    background: #dbdde1;
}

.macro {
    margin: 0 auto 3px 72px;
}

.views {
    display: flex;
    gap: 2px;
}

.views button {
    height: 12px;
    padding: 0 2px;
    gap: 2px;
}

.zoom-label {
    margin: 0 3px 0 6px;
}

.step svg {
    width: 6px;
    height: 6px;
}

.zoom {
    width: 74px;
    height: 8px;
    margin: 0 3px;
    appearance: none;
    background: linear-gradient(90deg, #73a95b 50%, #a9aeb6 50%) center / 100% 2px no-repeat;
}

.zoom::-webkit-slider-thumb {
    appearance: none;
    width: 4px;
    height: 8px;
    background: #fff;
    border: 1px solid #8b909a;
}

/* taskbar */
.taskbar {
    display: flex;
    height: 22px;
    background: #202225;
    color: #eee;
}

.taskbar > button {
    width: 27px;
    border-bottom: 1px solid transparent;
}

.taskbar > button svg {
    width: 14px;
    height: 14px;
}

.taskbar .open {
    border-bottom-color: #6fb1e6;
}

.taskbar .focused {
    background: #4b4d50;
}

.tray {
    display: flex;
    align-items: center;
    gap: 5px;
    margin-left: auto;
    padding-right: 12px;
}

.assist svg {
    width: 18px;
    height: 18px;
}

.clock {
    width: 32px;
    text-align: center;
    line-height: 10px;
}

.notes {
    position: relative;
}

.notes svg {
    width: 14px;
    height: 14px;
}

.notes span {
    position: absolute;
    right: 3px;
    bottom: 1px;
}
```
